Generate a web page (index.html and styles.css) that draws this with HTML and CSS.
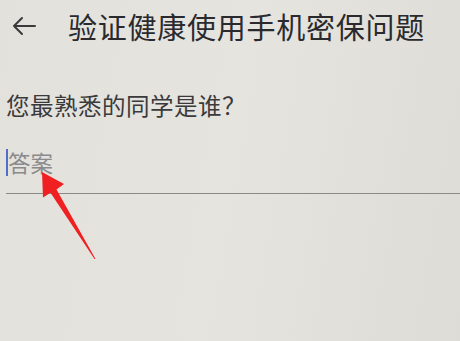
FILE: index.html
```html
<!DOCTYPE html>
<html lang="zh">
<head>
<meta charset="utf-8">
<link rel="stylesheet" href="styles.css">
</head>
<body>
<div class="screen">
  <header class="bar">
    <svg class="back" width="24" height="20" viewBox="0 0 24 20">
      <path d="M23 10H2M10 2L2 10l8 8" fill="none" stroke="#3a3a3c" stroke-width="2" stroke-linecap="round" stroke-linejoin="round"/>
    </svg>
    <h1 class="title">验证健康使用手机密保问题</h1>
  </header>
  <p class="question">您最熟悉的同学是谁？</p>
  <div class="field">
    <span class="caret"></span><span class="placeholder">答案</span>
  </div>
  <svg class="pointer" width="460" height="341" viewBox="0 0 460 341">
    <polygon points="42,172 64,184 56.5,189.5 95.5,259 94.5,259 50.5,192.8 43,197.5" fill="#f01f22"/>
  </svg>
</div>
</body>
</html>
```

FILE: styles.css
```css
html, body {
  margin: 0;
  padding: 0;
}
body {
  width: 460px;
  height: 341px;
  overflow: hidden;
  background: linear-gradient(100deg, #e3e1dc 0%, #e6e4df 50%, #dddcd6 100%);
  font-family: "Noto Sans CJK SC", "Noto Sans", sans-serif;
}
.screen {
  position: relative;
  width: 460px;
  height: 341px;
}
.bar {
  height: 51px;
  display: flex;
  align-items: center;
  padding-left: 12px;
}
.back {
  display: block;
  flex: none;
}
.title {
  margin: 0 0 0 32px;
  font-size: 29px;
  line-height: 32px;
  font-weight: 400;
  color: #2a2a2e;
  letter-spacing: 0.75px;
}
.question {
  margin: 39px 0 0 0;
  padding-left: 6px;
  font-size: 23.5px;
  line-height: 31px;
  color: #3a3a3c;
  letter-spacing: 0.5px;
}
.field {
  margin: 26px 0 0 6px;
  padding: 0 0 16px 0;
  display: flex;
  align-items: center;
  height: 30px;
  border-bottom: 1.5px solid #8c8a86;
}
.caret {
  display: block;
  width: 2px;
  height: 27px;
  background: #4f6fc8;
}
.placeholder {
  font-size: 22.5px;
  line-height: 30px;
  color: #8a8a8c;
}
.pointer {
  position: absolute;
  left: 0;
  top: 0;
  pointer-events: none;
}
```
